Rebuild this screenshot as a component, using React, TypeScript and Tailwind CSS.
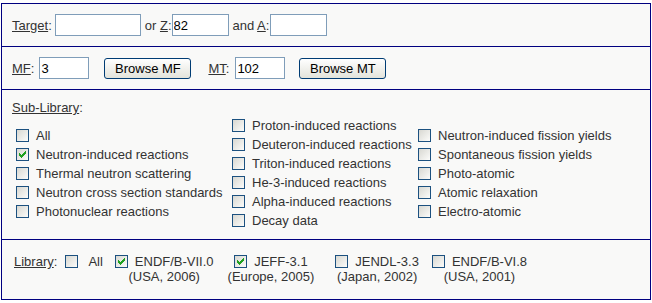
import type { ReactNode } from "react";

function Box({ checked }: { checked?: boolean }) {
  return (
    <span className="inline-flex h-[13px] w-[13px] shrink-0 items-center justify-center border border-[#1c5180] bg-linear-to-br from-[#d8d8d2] to-[#fcfcfa]">
      {checked && (
        <svg width="7" height="7" viewBox="0 0 7 7" shapeRendering="crispEdges">
          <path
            d="M6 0h1v3H6zM5 1h1v3H5zM4 2h1v3H4zM0 2h1v3H0zM1 3h1v3H1zM2 4h1v3H2zM3 3h1v3H3z"
            fill="#21a121"
          />
        </svg>
      )}
    </span>
  );
}

function Field({ w, value, className = "" }: { w: string; value?: string; className?: string }) {
  return (
    <input
      readOnly
      defaultValue={value}
      className={`h-[22px] ${w} border border-[#7f9db9] bg-white px-[1px] text-[13px] text-black outline-none ${className}`}
    />
  );
}

function Button({ children, className = "" }: { children: ReactNode; className?: string }) {
  return (
    <button
      className={`h-[21px] w-[87px] rounded-[3px] border border-[#003c74] bg-linear-to-b from-white to-[#e3e3db] text-[13px] text-black ${className}`}
    >
      {children}
    </button>
  );
}

function Option({ label, checked }: { label: string; checked?: boolean }) {
  return (
    <div className="flex h-[19px] items-center">
      <span className="ml-[4px] mr-[7px] flex">
        <Box checked={checked} />
      </span>
      <span className="whitespace-nowrap">{label}</span>
    </div>
  );
}

const col1 = [
  { label: "All" },
  { label: "Neutron-induced reactions", checked: true },
  { label: "Thermal neutron scattering" },
  { label: "Neutron cross section standards" },
  { label: "Photonuclear reactions" },
];

const col2 = [
  "Proton-induced reactions",
  "Deuteron-induced reactions",
  "Triton-induced reactions",
  "He-3-induced reactions",
  "Alpha-induced reactions",
  "Decay data",
];

const col3 = [
  "Neutron-induced fission yields",
  "Spontaneous fission yields",
  "Photo-atomic",
  "Atomic relaxation",
  "Electro-atomic",
];

function Lib({ name, sub, checked, className = "" }: { name: string; sub: string; checked?: boolean; className?: string }) {
  return (
    <div className={`flex flex-col items-center ${className}`}>
      <div className="flex h-[15px] items-center whitespace-nowrap">
        <Box checked={checked} />
        <span className="ml-[7px]">{name}</span>
      </div>
      <div className="h-[15px] whitespace-nowrap">{sub}</div>
    </div>
  );
}

export default function App() {
  return (
    <div className="min-h-[303px] bg-white pl-[1px] pt-[3px] font-['Liberation_Sans',Arial,sans-serif] text-[13px] leading-[15px] text-[#333]">
      <div className="w-[650px] border border-[#000080] bg-[#f9f9f8]">
        <div className="flex h-[42px] items-center pl-[10px]">
          <span>
            <u>Target</u>:
          </span>
          <Field w="w-[86px]" className="ml-[3px]" />
          <span className="ml-[4px]">
            or <u>Z</u>:
          </span>
          <Field w="w-[57px]" value="82" />
          <span className="ml-[4px]">
            and <u>A</u>:
          </span>
          <Field w="w-[57px]" className="ml-[1px]" />
        </div>

        <div className="flex h-[43px] items-center border-t border-[#000080] pl-[10px]">
          <span>
            <u>MF</u>:
          </span>
          <Field w="w-[50px]" value="3" className="ml-[5px]" />
          <Button className="ml-[15px]">Browse MF</Button>
          <span className="ml-[17px]">
            <u>MT</u>:
          </span>
          <Field w="w-[50px]" value="102" className="ml-[6px]" />
          <Button className="ml-[14px]">Browse MT</Button>
        </div>

        <div className="border-t border-[#000080] px-[10px] pb-[9px] pt-[10px]">
          <div>
            <u>Sub-Library</u>:
          </div>
          <div className="mt-[1px] flex items-center">
            <div className="w-[216px]">
              {col1.map((o) => (
                <Option key={o.label} label={o.label} checked={o.checked} />
              ))}
            </div>
            <div className="w-[186px]">
              {col2.map((l) => (
                <Option key={l} label={l} />
              ))}
            </div>
            <div>
              {col3.map((l) => (
                <Option key={l} label={l} />
              ))}
            </div>
          </div>
        </div>

        <div className="flex h-[60px] items-start border-t border-[#000080] pl-[12px] pt-[14px]">
          <span>
            <u>Library</u>:
          </span>
          <div className="ml-[8px] flex h-[15px] items-center">
            <Box />
            <span className="ml-[10px]">All</span>
          </div>
          <Lib name="ENDF/B-VII.0" sub="(USA, 2006)" checked className="ml-[12px]" />
          <Lib name="JEFF-3.1" sub="(Europe, 2005)" checked className="ml-[14px]" />
          <Lib name="JENDL-3.3" sub="(Japan, 2002)" className="ml-[21px]" />
          <Lib name="ENDF/B-VI.8" sub="(USA, 2001)" className="ml-[13px]" />
        </div>
      </div>
    </div>
  );
}
